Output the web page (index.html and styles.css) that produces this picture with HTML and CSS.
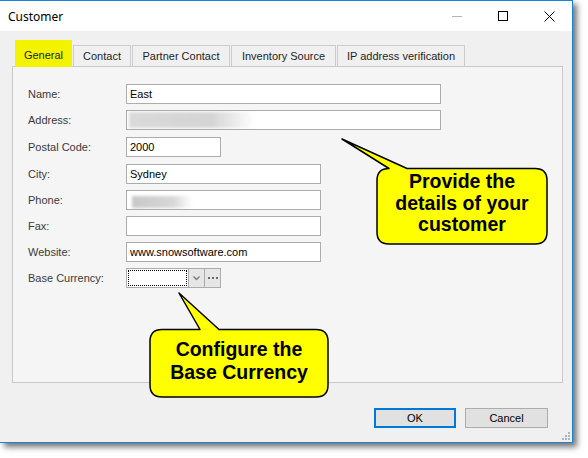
FILE: index.html
```html
<!DOCTYPE html>
<html lang="en">

<head>
    <meta charset="UTF-8">
    <meta name="viewport" content="width=device-width, initial-scale=1.0">
    <title>Customer</title>

    <link rel="stylesheet" href="styles.css">
</head>

<body>
    <div class="stage">
        <div class="window">
            <div class="titlebar">
                <span class="title">Customer</span>
                <div class="controls">
                    <span class="ctl"><span class="ico-min"></span></span>
                    <span class="ctl"><span class="ico-max"></span></span>
                    <span class="ctl">
                        <svg width="11" height="11" viewBox="0 0 11 11">
                            <path d="M0.5 0.5 L10.5 10.5 M10.5 0.5 L0.5 10.5" stroke="#000" stroke-width="1" fill="none" />
                        </svg>
                    </span>
                </div>
            </div>

            <div class="client">
                <ul class="tabs">
                    <li class="tab tab-active w-general">General</li>
                    <li class="tab w-contact">Contact</li>
                    <li class="tab w-partner">Partner Contact</li>
                    <li class="tab w-inventory">Inventory Source</li>
                    <li class="tab w-ip">IP address verification</li>
                </ul>

                <div class="panel">
                    <div class="form">
                        <label>Name:</label>
                        <div class="field w-long">East</div>

                        <label>Address:</label>
                        <div class="field w-long"><span class="blur blur-address"></span></div>

                        <label>Postal Code:</label>
                        <div class="field w-short">2000</div>

                        <label>City:</label>
                        <div class="field w-mid">Sydney</div>

                        <label>Phone:</label>
                        <div class="field w-mid"><span class="blur blur-phone"></span></div>

                        <label>Fax:</label>
                        <div class="field w-mid"></div>

                        <label>Website:</label>
                        <div class="field w-mid">www.snowsoftware.com</div>

                        <label>Base Currency:</label>
                        <div class="combo">
                            <div class="combo-text"><span class="focus-rect"></span></div>
                            <span class="combo-btn">
                                <svg width="7" height="5" viewBox="0 0 7 5">
                                    <path d="M0.5 0.5 L3.5 3.5 L6.5 0.5" stroke="#7a7a7a" stroke-width="1.4" fill="none" />
                                </svg>
                            </span>
                            <span class="combo-btn combo-more">
                                <svg width="10" height="2" viewBox="0 0 10 2" fill="#6a6a6a">
                                    <rect x="0" y="0" width="2" height="2" />
                                    <rect x="4" y="0" width="2" height="2" />
                                    <rect x="8" y="0" width="2" height="2" />
                                </svg>
                            </span>
                        </div>
                    </div>
                </div>

                <div class="actions">
                    <button type="button" class="btn btn-default">OK</button>
                    <button type="button" class="btn btn-cancel">Cancel</button>
                </div>
            </div>

            <span class="grip">
                <svg width="8" height="8" viewBox="0 0 8 8" fill="#b4b4b4">
                    <rect x="6" y="0" width="2" height="2" />
                    <rect x="3" y="3" width="2" height="2" />
                    <rect x="6" y="3" width="2" height="2" />
                    <rect x="0" y="6" width="2" height="2" />
                    <rect x="3" y="6" width="2" height="2" />
                    <rect x="6" y="6" width="2" height="2" />
                </svg>
            </span>
        </div>

        <!-- annotation callouts drawn on top of the dialog -->
        <svg class="callouts" width="588" height="458" viewBox="0 0 588 458">
            <path d="M389 168.5 L342 139 L407 168.5 L535 168.5 Q547 168.5 547 180.5 L547 232 Q547 244 535 244 L389 244 Q377 244 377 232 L377 180.5 Q377 168.5 389 168.5 Z"
                fill="#ffff00" stroke="#000" stroke-width="1.5" stroke-linejoin="round" />
            <path d="M162 329.5 L200 329.5 L179 293 L219 329.5 L316 329.5 Q328 329.5 328 341.5 L328 385 Q328 397 316 397 L162 397 Q150 397 150 385 L150 341.5 Q150 329.5 162 329.5 Z"
                fill="#ffff00" stroke="#000" stroke-width="1.5" stroke-linejoin="round" />
        </svg>
        <div class="callout-text callout-details">Provide the<br>details of your<br>customer</div>
        <div class="callout-text callout-currency">Configure the<br>Base Currency</div>
    </div>
</body>

</html>
```

FILE: styles.css
```css
/* 공통 */
* {
    box-sizing: border-box;
}

body {
    margin: 0;
    background: #fff;
    font-family: "Liberation Sans", Arial, sans-serif;
    font-size: 11px;
    color: #000;
}

ul,
li {
    margin: 0;
    padding: 0;
    list-style: none;
}

/* 창 */
.stage {
    position: relative;
    width: 588px;
    height: 458px;
}

.window {
    position: relative;
    display: flex;
    flex-direction: column;
    width: 573px;
    height: 443px;
    border-top: 1px solid #1883d7;
    border-right: 1px solid #1883d7;
    border-bottom: 1px solid #1883d7;
    background: #f0f0f0;
    box-shadow: 4px 4px 6px rgba(0, 0, 0, 0.55);
}

.titlebar {
    display: flex;
    justify-content: space-between;
    align-items: center;
    height: 30px;
    background: #fff;
}

.title {
    padding-left: 8px;
    font-family: "Noto Sans", "Open Sans", sans-serif;
    font-size: 12px;
}

.controls {
    display: flex;
    align-self: stretch;
}

.ctl {
    display: flex;
    justify-content: center;
    align-items: center;
    width: 46px;
}

.ico-min {
    display: block;
    width: 10px;
    height: 1px;
    background: #b5b5b5;
}

.ico-max {
    display: block;
    width: 10px;
    height: 10px;
    border: 1px solid #000;
}

.client {
    flex: 1;
    padding: 9px 9px 0 12px;
}

/* 탭 */
.tabs {
    position: relative;
    z-index: 1;
    display: flex;
    align-items: flex-end;
    gap: 1px;
    height: 26px;
    padding-left: 3px;
}

.tab {
    display: flex;
    justify-content: center;
    align-items: center;
    height: 21px;
    border: 1px solid #cdcdcd;
    border-bottom: 0;
    background: #f0f0f0;
    line-height: 13px;
    color: #1e1e1e;
}

.tab-active {
    align-items: flex-end;
    height: 27px;
    margin-bottom: -1px;
    padding-bottom: 5px;
    border-color: #f3f300;
    background: #f3f300;
}

.w-general { width: 57px; }
.w-contact { width: 58px; }
.w-partner { width: 98px; }
.w-inventory { width: 105px; }
.w-ip { width: 128px; }

.panel {
    width: 551px;
    height: 317px;
    padding: 17px 0 0 15px;
    border: 1px solid #c9c9c9;
    background: #f5f5f5;
}

/* 입력 폼 */
.form {
    display: grid;
    grid-template-columns: 98px auto;
    grid-template-rows: 20px 20px 21px 21px 20px 20px 20px 20px;
    row-gap: 6px;
    align-items: end;
    justify-items: start;
}

.form label {
    line-height: 20px;
    color: #3a3a3a;
}

.field {
    height: 20px;
    padding: 0 3px;
    border: 1px solid #acacac;
    background: #fff;
    line-height: 18px;
    white-space: nowrap;
    overflow: hidden;
}

.w-long { width: 315px; }
.w-mid { width: 195px; }
.w-short { width: 95px; }

.blur {
    display: inline-block;
    vertical-align: top;
    filter: blur(1.5px);
}

.blur-address {
    width: 126px;
    height: 16px;
    margin: 1px 0 0 -1px;
    background: linear-gradient(to right, #d9d9d9 0%, #d4d4d4 65%, rgba(220, 220, 220, 0) 100%);
}

.blur-phone {
    width: 60px;
    height: 12px;
    margin: 5px 0 0 2px;
    background: linear-gradient(to right, #c8c8c8 0%, #d8d8d8 70%, rgba(230, 230, 230, 0) 100%);
}

.combo {
    display: flex;
    width: 95px;
    height: 20px;
    border: 1px solid #acacac;
    background: #fff;
}

.combo-text {
    width: 61px;
    padding: 1px;
}

.focus-rect {
    display: block;
    height: 100%;
    border: 1px dotted #000;
}

.combo-btn {
    display: flex;
    justify-content: center;
    align-items: center;
    width: 16px;
    border-left: 1px solid #acacac;
    background: #e6e6e6;
}

/* 하단 버튼 */
.actions {
    display: flex;
    justify-content: flex-end;
    gap: 9px;
    margin-top: 25px;
    padding-right: 15px;
}

.btn {
    height: 20px;
    padding: 0;
    border: 1px solid #adadad;
    background: #e1e1e1;
    font: inherit;
    color: #000;
}

.btn-default {
    width: 82px;
    border: 2px solid #0078d7;
}

.btn-cancel {
    width: 83px;
}

.grip {
    position: absolute;
    right: 2px;
    bottom: 2px;
    display: flex;
}

/* 말풍선 */
.callouts {
    position: absolute;
    top: 0;
    left: 0;
    pointer-events: none;
}

.callout-text {
    position: absolute;
    font-family: "Liberation Sans", Arial, sans-serif;
    font-size: 19.5px;
    font-weight: bold;
    line-height: 21.5px;
    text-align: center;
}

.callout-details {
    top: 171px;
    left: 377px;
    width: 170px;
}

.callout-currency {
    top: 338px;
    left: 150px;
    width: 178px;
    line-height: 22.5px;
}
```
